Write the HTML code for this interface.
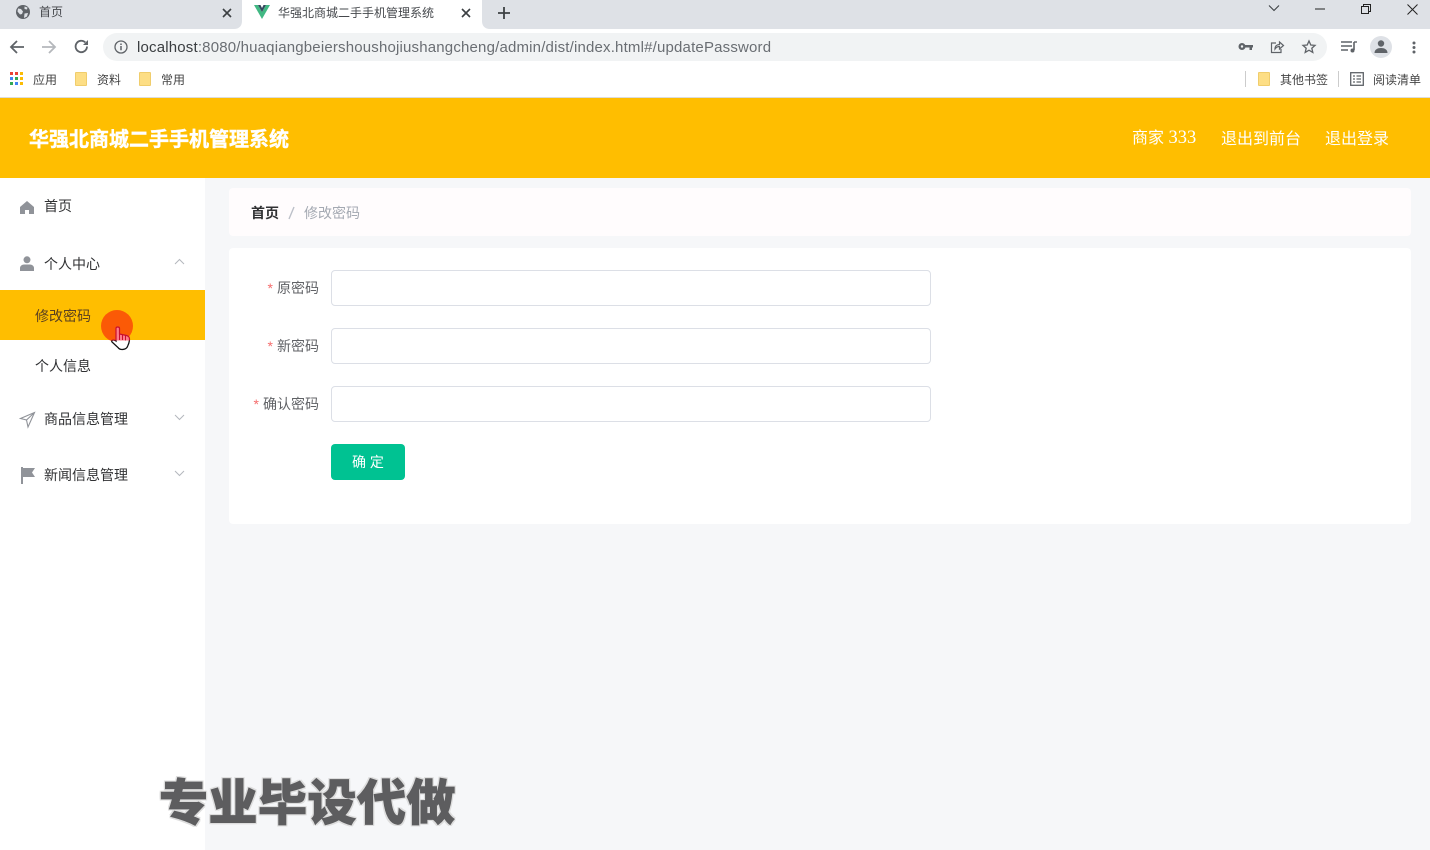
<!DOCTYPE html>
<html lang="zh"><head><meta charset="utf-8"><title>华强北商城二手手机管理系统</title>
<style>
*{box-sizing:border-box}
html,body{margin:0;padding:0;width:1430px;height:850px;overflow:hidden;background:#f6f7f9;font-family:"Liberation Sans","Noto Sans CJK SC",sans-serif}
.a{position:absolute;white-space:nowrap}
svg{position:absolute;overflow:visible}
.t12{font-size:12px;line-height:18px;color:#444}
.m{font-size:14px;line-height:20px;color:#303133}
.lab{font-size:14px;line-height:20px;color:#606266;text-align:right}
.lab i{font-style:normal;color:#f56c6c;margin-right:4px}
.in{position:absolute;left:331px;width:600px;height:36px;background:#fff;border:1px solid #dcdfe6;border-radius:4px}
.fold{width:12px;height:14px;background:#fdde85;border:1px solid #f0cd6c;border-radius:1px}
.hd{font-size:16px;line-height:22px;color:#fff}
</style></head><body>
<!-- tab strip -->
<div class="a" style="left:0;top:0;width:1430px;height:29px;background:#dee1e6"></div>
<div class="a" style="left:242px;top:0;width:240px;height:29px;background:#fff"></div>
<svg style="left:234px;top:21px" width="8" height="8" viewBox="0 0 8 8"><path d="M8 0v8H0C5 8 8 5 8 0z" fill="#fff"/></svg>
<svg style="left:482px;top:21px" width="8" height="8" viewBox="0 0 8 8"><path d="M0 0v8h8C3 8 0 5 0 0z" fill="#fff"/></svg>
<svg style="left:16px;top:5px" width="14" height="14" viewBox="0 0 14 14"><circle cx="7" cy="7" r="7" fill="#5f6368"/><path d="M2 3.500l3 .5 2 2.500-1 2.500-2 .5-2.500-3zM8.500 1.500l3 1-.5 2-2.500-.5zM8.500 8.500l3.500-.5-1 3.500-3 1.500z" fill="#dee1e6"/></svg>
<div class="a t12" style="left:39px;top:3px;color:#45484c">首页</div>
<svg style="left:222px;top:8px" width="10" height="10" viewBox="0 0 10 10"><path d="M1 1l8 8M9 1l-8 8" stroke="#3c4043" stroke-width="1.600"/></svg>
<svg style="left:254px;top:5px" width="16" height="14" viewBox="0 0 16 14"><path d="M0 0h4l4 7 4-7h4L8 14z" fill="#41b883"/><path d="M4 0h2.500L8 3l1.500-3H12L8 7z" fill="#35495e"/></svg>
<div class="a t12" style="left:278px;top:4px;color:#45484c">华强北商城二手手机管理系统</div>
<svg style="left:461px;top:8px" width="10" height="10" viewBox="0 0 10 10"><path d="M1 1l8 8M9 1l-8 8" stroke="#3c4043" stroke-width="1.600"/></svg>
<svg style="left:497px;top:6px" width="14" height="14" viewBox="0 0 14 14"><path d="M7 1v12M1 7h12" stroke="#3c4043" stroke-width="1.800"/></svg>
<svg style="left:1268px;top:4px" width="12" height="9" viewBox="0 0 12 9"><path d="M1 1.500l5 5 5-5" fill="none" stroke="#3c4043" stroke-width="1.100"/></svg>
<svg style="left:1315px;top:8px" width="10" height="2" viewBox="0 0 10 2"><path d="M0 1h10" stroke="#222" stroke-width="1"/></svg>
<svg style="left:1361px;top:4px" width="10" height="10" viewBox="0 0 10 10"><path d="M.5 2.500h7v7h-7zM2.500 2.500v-2h7v7h-2" fill="none" stroke="#222" stroke-width="1"/></svg>
<svg style="left:1407px;top:4px" width="11" height="11" viewBox="0 0 11 11"><path d="M.5 .5l10 10M10.500 .5l-10 10" stroke="#222" stroke-width="1"/></svg>
<!-- address bar -->
<div class="a" style="left:0;top:29px;width:1430px;height:68px;background:#fff"></div>
<div class="a" style="left:0;top:97px;width:1430px;height:1px;background:#dcdcdc"></div>
<svg style="left:9px;top:39px" width="16" height="16" viewBox="0 0 16 16"><path d="M15 8H2M8 2L2 8l6 6" fill="none" stroke="#5f6368" stroke-width="1.800"/></svg>
<svg style="left:41px;top:39px" width="16" height="16" viewBox="0 0 16 16"><path d="M1 8h13M8 2l6 6-6 6" fill="none" stroke="#b5b8bc" stroke-width="1.800"/></svg>
<svg style="left:74px;top:39px" width="15" height="15" viewBox="0 0 15 15"><path d="M13 7.500A5.700 5.700 0 1 1 11.300 3.400" fill="none" stroke="#5f6368" stroke-width="1.800"/><path d="M14 1v5H9z" fill="#5f6368"/></svg>
<div class="a" style="left:103px;top:33px;width:1224px;height:28px;background:#f1f3f4;border-radius:14px"></div>
<svg style="left:114px;top:40px" width="14" height="14" viewBox="0 0 14 14"><circle cx="7" cy="7" r="6" fill="none" stroke="#5f6368" stroke-width="1.300"/><path d="M7 6v4.200M7 3.500v1.500" stroke="#5f6368" stroke-width="1.500"/></svg>
<div class="a" style="left:137px;top:38px;font-size:15px;line-height:20px;color:#6a6e73;letter-spacing:.18px"><span style="color:#3a3d40">localhost</span>:8080/huaqiangbeiershoushojiushangcheng/admin/dist/index.html#/updatePassword</div>
<svg style="left:1238px;top:42px" width="15" height="9" viewBox="0 0 15 9"><circle cx="4" cy="4.500" r="3.500" fill="#5f6368"/><circle cx="4" cy="4.500" r="1.200" fill="#f1f3f4"/><path d="M7 3h8v2.500h-1v2.500h-2.500V5.500H7z" fill="#5f6368"/></svg>
<svg style="left:1270px;top:40px" width="14" height="14" viewBox="0 0 14 14"><path d="M6 3H1.500v9.500H11V9M5 9c0-3 2-4.500 4.500-4.500V2l4 3.500-4 3.500V6.500C7.500 6.500 6 7.500 5 9z" fill="none" stroke="#5f6368" stroke-width="1.200"/></svg>
<svg style="left:1302px;top:40px" width="14" height="14" viewBox="0 0 14 14"><path d="M7 1l1.800 4 4.200.4-3.200 2.800 1 4.200L7 10.200l-3.800 2.200 1-4.200L1 5.400 5.200 5z" fill="none" stroke="#5f6368" stroke-width="1.300"/></svg>
<svg style="left:1341px;top:41px" width="16" height="12" viewBox="0 0 16 12"><path d="M0 1h11M0 5h11M0 9h7" stroke="#5f6368" stroke-width="1.400"/><path d="M13 1v8" stroke="#5f6368" stroke-width="1.600"/><circle cx="11.500" cy="9.500" r="2" fill="#5f6368"/><path d="M13 1h3" stroke="#5f6368" stroke-width="1.400"/></svg>
<div class="a" style="left:1370px;top:36px;width:22px;height:22px;border-radius:50%;background:#dee1e6"></div>
<svg style="left:1374px;top:40px" width="14" height="13" viewBox="0 0 14 13"><circle cx="7" cy="3.500" r="3.200" fill="#5f6368"/><path d="M0.500 13c0-3.500 3-5 6.500-5s6.500 1.500 6.500 5z" fill="#5f6368"/></svg>
<svg style="left:1412px;top:41px" width="4" height="14" viewBox="0 0 4 14"><circle cx="2" cy="2" r="1.500" fill="#5f6368"/><circle cx="2" cy="6.500" r="1.500" fill="#5f6368"/><circle cx="2" cy="11" r="1.500" fill="#5f6368"/></svg>
<!-- bookmarks -->
<svg style="left:10px;top:72px" width="14" height="14" viewBox="0 0 14 14"><g><rect x="0" y="0" width="3" height="3" fill="#ea4335"/><rect x="5" y="0" width="3" height="3" fill="#ea4335"/><rect x="10" y="0" width="3" height="3" fill="#fbbc04"/><rect x="0" y="5" width="3" height="3" fill="#4285f4"/><rect x="5" y="5" width="3" height="3" fill="#34a853"/><rect x="10" y="5" width="3" height="3" fill="#fbbc04"/><rect x="0" y="10" width="3" height="3" fill="#34a853"/><rect x="5" y="10" width="3" height="3" fill="#4285f4"/><rect x="10" y="10" width="3" height="3" fill="#fbbc04"/></g></svg>
<div class="a t12" style="left:33px;top:71px">应用</div>
<div class="a fold" style="left:75px;top:72px"></div><div class="a t12" style="left:97px;top:71px">资料</div>
<div class="a fold" style="left:139px;top:72px"></div><div class="a t12" style="left:161px;top:71px">常用</div>
<div class="a" style="left:1245px;top:71px;width:1px;height:16px;background:#ccc"></div>
<div class="a fold" style="left:1258px;top:72px"></div><div class="a t12" style="left:1280px;top:71px">其他书签</div>
<div class="a" style="left:1338px;top:71px;width:1px;height:16px;background:#ccc"></div>
<svg style="left:1350px;top:72px" width="14" height="14" viewBox="0 0 14 14"><rect x=".7" y=".7" width="12.600" height="12.600" fill="none" stroke="#5f6368" stroke-width="1.300"/><path d="M3 4h2M3 7h2M3 10h2M6.500 4h4.500M6.500 7h4.500M6.500 10h4.500" stroke="#5f6368" stroke-width="1.200"/></svg>
<div class="a t12" style="left:1373px;top:71px">阅读清单</div>
<!-- header -->
<div class="a" style="left:0;top:98px;width:1430px;height:80px;background:#ffbe00"></div>
<div class="a" style="left:29px;top:126px;font-size:20px;line-height:28px;font-weight:700;color:#fff;-webkit-text-stroke:.4px #fff">华强北商城二手手机管理系统</div>
<div class="a hd" style="left:1132px;top:127px">商家 <span style="font-family:'Liberation Serif',serif;font-size:18.500px">333</span></div>
<div class="a hd" style="left:1221px;top:129px">退出到前台</div>
<div class="a hd" style="left:1325px;top:129px">退出登录</div>
<!-- sidebar -->
<div class="a" style="left:0;top:178px;width:205px;height:672px;background:#fff"></div>
<svg style="left:20px;top:201px" width="14" height="13" viewBox="0 0 14 13"><path d="M7 0L0 6v7h5V9h4v4h5V6z" fill="#909399"/></svg>
<div class="a m" style="left:44px;top:196px">首页</div>
<svg style="left:20px;top:256px" width="14" height="15" viewBox="0 0 14 15"><circle cx="7" cy="3.800" r="3.500" fill="#909399"/><path d="M0 15v-3c0-2 2-3.500 4-3.500h6c2 0 4 1.500 4 3.500v3z" fill="#909399"/></svg>
<div class="a m" style="left:44px;top:254px">个人中心</div>
<svg style="left:174px;top:258px" width="11" height="7" viewBox="0 0 11 7"><path d="M1 6l4.500-4.500L10 6" fill="none" stroke="#b4b7bd" stroke-width="1"/></svg>
<div class="a" style="left:0;top:290px;width:205px;height:50px;background:#ffbe00"></div>
<div class="a m" style="left:35px;top:306px;color:#5a4020">修改密码</div>
<div class="a" style="left:101px;top:310px;width:32px;height:32px;border-radius:50%;background:#fb5a06"></div>
<svg style="left:111px;top:326px" width="20" height="25" viewBox="0 0 20 25">
<defs><clipPath id="up"><rect x="-1" y="-1" width="22" height="15.500"/></clipPath><clipPath id="dn"><rect x="-1" y="14.500" width="22" height="12"/></clipPath></defs>
<path d="M5 2.500c0-2 3.500-2 3.500 0V8l7 1.500c2 .5 3 1.500 3 3.500 0 3-1 5.500-2 7.500-1.500 3.500-7.500 4-9.500 1L1 16c-1-1.500 1-3 4-1z" fill="#fff" stroke="#111" stroke-width="1.300" clip-path="url(#dn)"/>
<path d="M5 2.500c0-2 3.500-2 3.500 0V8l7 1.500c2 .5 3 1.500 3 3.500 0 3-1 5.500-2 7.500-1.500 3.500-7.500 4-9.500 1L1 16c-1-1.500 1-3 4-1z" fill="#ff7d8b" stroke="#c8102e" stroke-width="1.200" clip-path="url(#up)"/>
<path d="M8.500 8v6M11.500 9v5M14.500 9.500v5" stroke="#c8102e" stroke-width="1"/></svg>
<div class="a m" style="left:35px;top:356px">个人信息</div>
<svg style="left:20px;top:412px" width="15" height="16" viewBox="0 0 15 16"><path d="M14.500 .5L.5 6.500l6 1.500 1.500 7z M14.500 .5L6.500 8" fill="none" stroke="#909399" stroke-width="1.100"/></svg>
<div class="a m" style="left:44px;top:409px">商品信息管理</div>
<svg style="left:174px;top:414px" width="11" height="7" viewBox="0 0 11 7"><path d="M1 1l4.500 4.500L10 1" fill="none" stroke="#b4b7bd" stroke-width="1"/></svg>
<svg style="left:21px;top:467px" width="14" height="17" viewBox="0 0 14 17"><path d="M0 0h2v17H0z" fill="#909399"/><path d="M2 1h12l-3 4.500L14 10H2z" fill="#909399"/></svg>
<div class="a m" style="left:44px;top:465px">新闻信息管理</div>
<svg style="left:174px;top:470px" width="11" height="7" viewBox="0 0 11 7"><path d="M1 1l4.500 4.500L10 1" fill="none" stroke="#b4b7bd" stroke-width="1"/></svg>
<!-- breadcrumb -->
<div class="a" style="left:229px;top:188px;width:1182px;height:48px;background:#fffcfd;border-radius:4px"></div>
<div class="a" style="left:251px;top:203px;font-size:14px;line-height:20px;font-weight:700;color:#303133">首页</div>
<svg style="left:288px;top:206px" width="7" height="14" viewBox="0 0 7 14"><path d="M6 1L1 13" stroke="#bcc0c8" stroke-width="1.400"/></svg>
<div class="a" style="left:304px;top:203px;font-size:14px;line-height:20px;color:#a4a9b2">修改密码</div>
<!-- form -->
<div class="a" style="left:229px;top:248px;width:1182px;height:276px;background:#fff;border-radius:4px"></div>
<div class="a lab" style="left:229px;top:278px;width:90px"><i>*</i>原密码</div>
<div class="in" style="top:270px"></div>
<div class="a lab" style="left:229px;top:336px;width:90px"><i>*</i>新密码</div>
<div class="in" style="top:328px"></div>
<div class="a lab" style="left:229px;top:394px;width:90px"><i>*</i>确认密码</div>
<div class="in" style="top:386px"></div>
<div class="a" style="left:331px;top:444px;width:74px;height:36px;background:#00c292;border-radius:4px;color:#fff;font-size:14px;line-height:36px;text-align:center">确 定</div>
<!-- watermark -->
<div class="a" style="left:159px;top:769px;font-size:49px;line-height:62px;font-weight:900;color:#5d5d5f;letter-spacing:.5px;font-family:'Noto Sans CJK SC',sans-serif;-webkit-text-stroke:.8px #5d5d5f;text-shadow:1.500px 0 #ddd,-1.500px 0 #ddd,0 1.500px #ddd,0 -1.500px #ddd,1.500px 1.500px #ddd,-1.500px -1.500px #ddd,1.500px -1.500px #ddd,-1.500px 1.500px #ddd">专业毕设代做</div>
</body></html>
